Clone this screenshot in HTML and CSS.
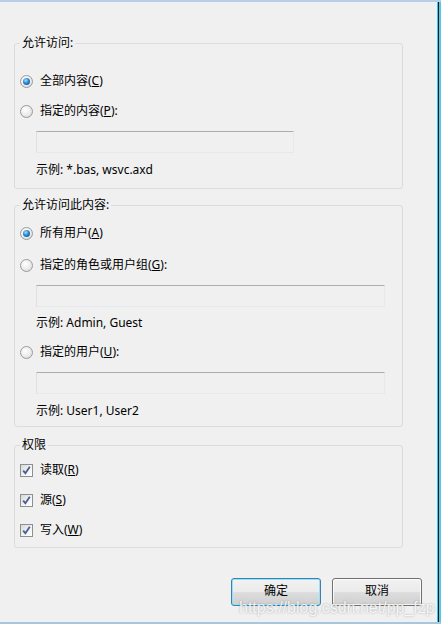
FILE: index.html
```html
<!DOCTYPE html>
<html lang="zh-CN">
<head>
<meta charset="utf-8">
<title>授权规则</title>
<link rel="stylesheet" href="styles.css">
</head>
<body>
<div class="window">
  <div class="main">
    <fieldset class="group g1">
      <legend>允许访问:</legend>
      <label class="row r-first"><span class="radio checked"></span><span class="lbl">全部内容(<u>C</u>)</span></label>
      <label class="row r-next1"><span class="radio"></span><span class="lbl">指定的内容(<u>P</u>):</span></label>
      <div class="field f-short"></div>
      <div class="example">示例: *.bas, wsvc.axd</div>
    </fieldset>

    <fieldset class="group g2">
      <legend>允许访问此内容:</legend>
      <label class="row r-first"><span class="radio checked"></span><span class="lbl">所有用户(<u>A</u>)</span></label>
      <label class="row r-next2"><span class="radio"></span><span class="lbl">指定的角色或用户组(<u>G</u>):</span></label>
      <div class="field f-long"></div>
      <div class="example ex-a">示例: Admin, Guest</div>
      <label class="row r-next3"><span class="radio"></span><span class="lbl">指定的用户(<u>U</u>):</span></label>
      <div class="field f-long"></div>
      <div class="example ex-b">示例: User1, User2</div>
    </fieldset>

    <fieldset class="group g3">
      <legend>权限</legend>
      <label class="row c-first"><span class="check"><svg width="11" height="11" viewBox="0 0 11 11"><path d="M2.2 5.6 L4.4 8.2 L8.8 1.8" fill="none" stroke="#4a5e96" stroke-width="1.8"/></svg></span><span class="lbl">读取(<u>R</u>)</span></label>
      <label class="row c-next"><span class="check"><svg width="11" height="11" viewBox="0 0 11 11"><path d="M2.2 5.6 L4.4 8.2 L8.8 1.8" fill="none" stroke="#4a5e96" stroke-width="1.8"/></svg></span><span class="lbl">源(<u>S</u>)</span></label>
      <label class="row c-next"><span class="check"><svg width="11" height="11" viewBox="0 0 11 11"><path d="M2.2 5.6 L4.4 8.2 L8.8 1.8" fill="none" stroke="#4a5e96" stroke-width="1.8"/></svg></span><span class="lbl">写入(<u>W</u>)</span></label>
    </fieldset>

    <div class="buttons">
      <button class="btn btn-default">确定</button>
      <button class="btn">取消</button>
    </div>

    <div class="watermark">https://blog.csdn.net/pp_fzp</div>
  </div>
  <div class="edge"></div>
</div>
</body>
</html>
```

FILE: styles.css
```css
html, body {
  margin: 0;
  padding: 0;
}

body {
  font-family: "Noto Sans", "Noto Sans CJK SC", sans-serif;
  font-size: 12px;
  color: #000;
  background: #f0f0f0;
}

.window {
  display: flex;
  width: 441px;
  height: 624px;
  box-sizing: border-box;
  border-top: 2px solid #b5cfe9;
  border-bottom: 2px solid #a9c7dc;
  background: #f0f0f0;
  overflow: hidden;
}

.main {
  position: relative;
  flex: 1;
  padding-top: 34px;
  display: flex;
  flex-direction: column;
}

.edge {
  width: 4px;
  background: linear-gradient(to right, #3ec4f4 0, #3ec4f4 1px, #1c1c1c 1px, #1c1c1c 2px, #56c7ec 2px);
}

.group {
  margin: 0 0 0 14px;
  width: 389px;
  box-sizing: border-box;
  padding: 0 5px;
  border: 1px solid #d8dde2;
  border-radius: 3px;
  min-inline-size: 0;
  display: flex;
  flex-direction: column;
  align-items: flex-start;
}

.group legend {
  padding: 0 2px;
  line-height: 14px;
  height: 14px;
}

.g1 { padding-top: 21px; padding-bottom: 10px; }
.g2 { margin-top: 9px; padding-top: 11px; padding-bottom: 7px; }
.g3 { margin-top: 11px; padding-top: 8px; padding-bottom: 7px; }

.row {
  display: flex;
  align-items: center;
  height: 20px;
  line-height: 16px;
}

.r-next1 { margin-top: 10px; }
.r-next2 { margin-top: 12px; }
.r-next3 { margin-top: 11px; }
.c-next { margin-top: 10px; }

.lbl u {
  text-decoration: underline;
  text-underline-offset: 1px;
}

.radio {
  width: 13px;
  height: 13px;
  box-sizing: border-box;
  border-radius: 50%;
  border: 1px solid #9a9a9a;
  background: radial-gradient(circle at 40% 35%, #ffffff 0%, #ebebeb 55%, #d2d2d2 100%);
  display: flex;
  align-items: center;
  justify-content: center;
  margin-right: 7px;
  flex: none;
}

.radio.checked::after {
  content: "";
  width: 7px;
  height: 7px;
  border-radius: 50%;
  background: radial-gradient(circle at 40% 35%, #a6e2fb 0%, #2a86d0 45%, #0d4a8a 100%);
}

.check {
  width: 13px;
  height: 13px;
  box-sizing: border-box;
  border: 1px solid #8e8f8f;
  background: linear-gradient(135deg, #d8d8d8 0%, #f4f4f4 60%, #ffffff 100%);
  display: flex;
  align-items: center;
  justify-content: center;
  margin-right: 7px;
  flex: none;
}

.check svg {
  display: block;
}

.field {
  margin-top: 10px;
  margin-left: 16px;
  height: 22px;
  box-sizing: border-box;
  border: 1px solid #e3e9ef;
  border-top-color: #abadb3;
  border-left-color: #dbdfe6;
  background: #f0f0f0;
  border-radius: 1px;
}

.f-short { width: 258px; }
.f-long { width: 349px; }

.example {
  margin-top: 9px;
  margin-left: 16px;
  height: 16px;
  line-height: 16px;
}

.ex-a { margin-top: 8px; }
.ex-b { margin-top: 9px; }

.buttons {
  margin-top: 30px;
  display: flex;
  justify-content: flex-end;
  gap: 11px;
  padding-right: 15px;
}

.btn {
  width: 90px;
  height: 28px;
  box-sizing: border-box;
  border: 1px solid #707070;
  border-radius: 3px;
  background: linear-gradient(#f2f2f2 0%, #ebebeb 48%, #dddddd 52%, #cfcfcf 100%);
  box-shadow: inset 0 0 0 1px rgba(255, 255, 255, 0.8);
  font-family: "Noto Sans CJK SC", sans-serif;
  font-size: 12px;
  line-height: 16px;
  padding: 0 0 4px;
  color: #000;
}

.btn-default {
  border-color: #3c7fb1;
  box-shadow: inset 0 0 0 1px #94e2f8;
}

.watermark {
  position: absolute;
  left: 239px;
  top: 597px;
  font-family: "Liberation Sans", Arial, sans-serif;
  font-size: 16px;
  line-height: 18px;
  color: rgba(255, 255, 255, 0.85);
  text-shadow: 0 0 2px rgba(110, 110, 110, 0.6);
  white-space: nowrap;
  pointer-events: none;
}
```
